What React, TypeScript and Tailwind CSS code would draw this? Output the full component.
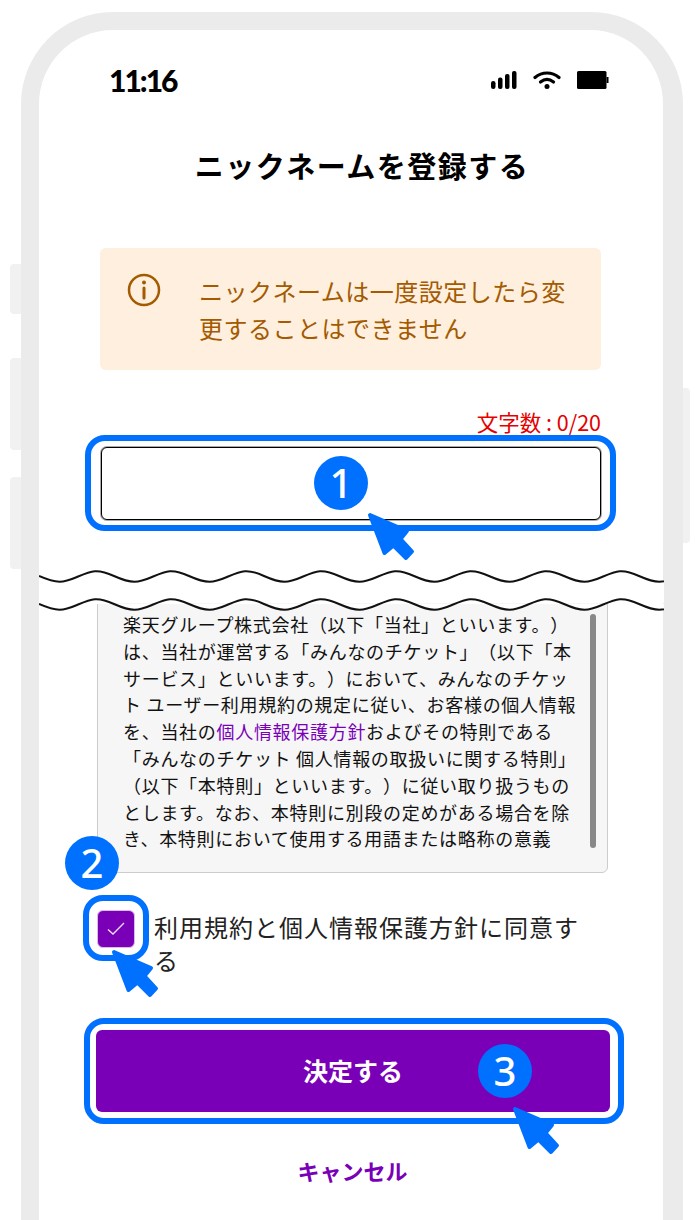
const wavePath = (y: number) => {
  let d = `M0 ${y + 1}`;
  for (let x = 0; x < 650; x += 75) {
    d += ` C${x + 18} ${y + 9} ${x + 24} ${y + 8} ${x + 38} ${y + 2} S${x + 58} ${y - 7} ${x + 75} ${y + 1}`;
  }
  return d;
};

function Cursor({ className }: { className: string }) {
  return (
    <svg className={className} width="50" height="50" viewBox="0 0 50 50" fill="#0070ff" stroke="#0070ff" strokeWidth="4" strokeLinejoin="round">
      <path d="M4 3 L41 19 L34.500 27 L46 39.500 L40 46 L27.500 33.500 L18.500 41 Z" />
    </svg>
  );
}

function Badge({ n, className }: { n: number; className: string }) {
  return (
    <div
      className={`absolute w-[54px] h-[54px] rounded-full bg-[#0070ff] flex items-center justify-center text-white text-[40px] font-medium leading-none ${className}`}
      style={{ fontFamily: '"Noto Sans", sans-serif' }}
    >
      {n}
    </div>
  );
}

export default function App() {
  return (
    <div
      className="relative flex w-[700px] h-[1220px] bg-white overflow-hidden pl-[10px] [text-spacing-trim:space-all]"
      style={{ fontFamily: '"Noto Sans CJK JP", "Noto Sans", sans-serif' }}
    >
      {/* side buttons, left */}
      <div className="w-[11px] shrink-0 pt-[264px] flex flex-col">
        <div className="h-[50px] rounded-l bg-[#f1f1f1]" />
        <div className="mt-[44px] h-[92px] rounded-l bg-[#f1f1f1]" />
        <div className="mt-[27px] h-[92px] rounded-l bg-[#f1f1f1]" />
      </div>

      <div className="mt-[12px] w-[662px] h-[1300px] shrink-0 border-[#ebebeb] border-t-[18px] border-l-[18px] border-r-[20px] rounded-t-[92px] bg-white">
        <div className="h-[100px] flex items-center justify-between pl-[70px] pr-[54px]">
          <span className="text-[30px] font-black text-black leading-none tracking-[-2px]" style={{ fontFamily: 'Lato, sans-serif' }}>
            11:16
          </span>
          <div className="flex items-center">
            <svg width="26" height="18" viewBox="0 0 26 18" fill="#000">
              <rect x="0" y="10" width="4.500" height="8" rx="2.200" />
              <rect x="7" y="6.500" width="4.500" height="11.500" rx="2" />
              <rect x="14" y="3" width="4.500" height="15" rx="2" />
              <rect x="21" y="0" width="4.500" height="18" rx="2" />
            </svg>
            <svg className="ml-[16px]" width="28" height="18" viewBox="0 0 28 18" fill="none" stroke="#000" strokeWidth="3.200" strokeLinecap="round">
              <path d="M2 6.500 C9 .5 19 .5 26 6.500" />
              <path d="M7.500 11 C11.500 7.800 16.500 7.800 20.500 11" />
              <circle cx="14" cy="15.500" r="2.500" fill="#000" stroke="none" />
            </svg>
            <svg className="ml-[16px]" width="32" height="18" viewBox="0 0 32 18" fill="#000">
              <rect x="0" y="0" width="29.500" height="18" rx="1.500" />
              <rect x="29.500" y="6" width="2" height="6" />
            </svg>
          </div>
        </div>

        <h1 className="h-[72px] pl-[22px] flex items-center justify-center text-[29px] font-bold tracking-[1.500px] text-black">
          ニックネームを登録する
        </h1>

        <div className="ml-[61px] mt-[46px] w-[501px] h-[122px] rounded-md bg-[#feefde] flex text-[#a35a00]">
          <svg className="ml-[27px] mt-[25px] shrink-0" width="34" height="34" viewBox="0 0 34 34" fill="none" stroke="#a35a00" strokeWidth="2.500">
            <circle cx="17" cy="17" r="15" />
            <path d="M17 15 V25" strokeWidth="3" strokeLinecap="round" />
            <circle cx="17" cy="9.500" r="2" fill="#a35a00" stroke="none" />
          </svg>
          <p className="ml-[38px] mt-[24px] w-[380px] text-[24px] leading-[37px] tracking-[.5px]">
            ニックネームは一度設定したら変更することはできません
          </p>
        </div>

        <div className="mt-[38px] w-[562px] text-right text-[21.500px] leading-[28px] text-[#e60000]">文字数 : 0/20</div>

        <div className="relative mt-[-1px] ml-[46px] w-[531px] h-[96px] rounded-[20px] border-[6px] border-[#0070ff] pl-[10px] pt-[6px]">
          <div className="w-[500px] h-[73px] rounded-md border border-black shadow-[0_0_0_1px_#aaaaaa] bg-white" />
          <Badge n={1} className="left-[223px] top-[15px]" />
          <Cursor className="absolute left-[275px] top-[71px] z-10" />
        </div>

        <div className="relative mt-[59px] ml-[58px] w-[511px] h-[283px] rounded-md border border-[#cccccc] bg-[#f6f6f6] overflow-hidden pl-[25px] pt-[20px]">
          <p className="w-[458px] text-[18px] leading-[26.800px] tracking-[.7px] text-[#111]">
            楽天グループ株式会社（以下「当社」といいます。）は、当社が運営する「みんなのチケット」（以下「本サービス」といいます。）において、みんなのチケット ユーザー利用規約の規定に従い、お客様の個人情報を、当社の
            <span className="text-[#7a00b8]">個人情報保護方針</span>
            およびその特則である「みんなのチケット 個人情報の取扱いに関する特則」（以下「本特則」といいます。）に従い取り扱うものとします。なお、本特則に別段の定めがある場合を除き、本特則において使用する用語または略称の意義
          </p>
          <div className="absolute left-[492px] top-[23px] w-[6px] h-[234px] rounded-full bg-[#888888]" />
        </div>

        <div className="mt-[22px] ml-[44px] flex items-start h-[81px]">
          <div className="relative w-[66px] h-[66px] shrink-0 rounded-[20px] border-[6px] border-[#0070ff] pl-[8px] pt-[9px]">
            <div className="w-[38px] h-[38px] rounded-md bg-[#7a00b8] border border-[#dcb8ee] flex items-center justify-center">
              <svg width="18" height="14" viewBox="0 0 18 14" fill="none" stroke="#f3e6fa" strokeWidth="1.300">
                <path d="M1 7.500 L6 12 L17 1" />
              </svg>
            </div>
            <Badge n={2} className="left-[-24px] top-[-65px]" />
            <Cursor className="absolute left-[21px] top-[48px] z-10" />
          </div>
          <label className="ml-[5px] mt-[15px] w-[440px] text-[24px] leading-[33px] tracking-[1px] text-[#222]">
            利用規約と個人情報保護方針に同意する
          </label>
        </div>

        <div className="relative mt-[42px] ml-[45px] w-[540px] h-[106px] rounded-[20px] border-[6px] border-[#0070ff] pl-[6px] pt-[6px]">
          <button className="block w-[514px] h-[82px] rounded-md bg-[#7a00b8] text-white text-[25px] font-bold">決定する</button>
          <Badge n={3} className="left-[388px] top-[20px]" />
          <Cursor className="absolute left-[421px] top-[82px] z-10" />
        </div>

        <div className="mt-[32px] text-center text-[22px] leading-[28px] font-bold text-[#7a00b8] pl-[3px]">キャンセル</div>
      </div>

      {/* side button, right */}
      <div className="mt-[388px] w-[7px] h-[155px] rounded-r bg-[#f1f1f1]" />

      {/* torn page break */}
      <svg className="absolute left-[39px] top-[560px]" width="625" height="55" viewBox="0 0 625 55" fill="none">
        <path d={`${wavePath(15)} V43 H0 Z`} fill="#fff" />
        <path d={wavePath(43)} fill="#fff" stroke="none" />
        <path d={wavePath(15)} stroke="#111" strokeWidth="2" />
        <path d={wavePath(43)} stroke="#111" strokeWidth="2" />
      </svg>
    </div>
  );
}
